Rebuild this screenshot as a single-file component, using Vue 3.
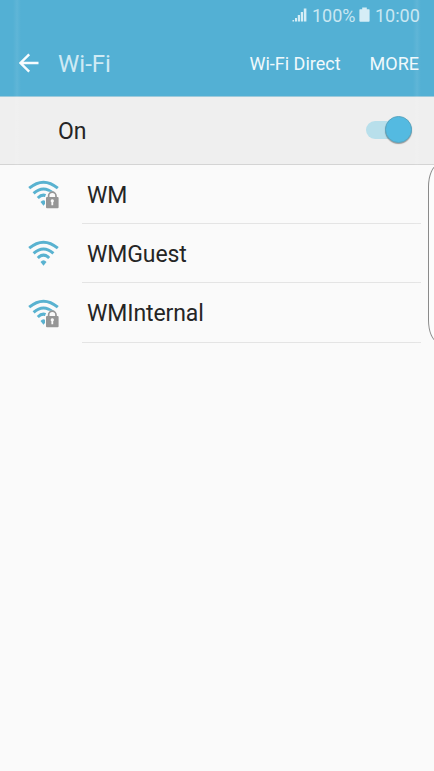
<script setup>
const networks = [
  { name: 'WM', locked: true },
  { name: 'WMGuest', locked: false },
  { name: 'WMInternal', locked: true },
]
</script>

<template>
  <div class="screen">
    <header class="top">
      <div class="status">
        <svg class="signal" width="16" height="16" viewBox="0 0 16 16">
          <path d="M0.5 13h1.6v1.5H0.5zM3 11h2v3.5H3zM5.8 8h2.2v6.5H5.8zM8.8 5h2.2v9.5H8.8zM11.8 1.5h2.6v13h-2.6z" />
        </svg>
        <span class="percent">100%</span>
        <svg class="battery" width="11" height="16" viewBox="0 0 11 16">
          <path d="M3.2 0.5h4.6v1.8H10a.6.6 0 0 1 .6.6V14a.8.8 0 0 1-.8.8H1.2a.8.8 0 0 1-.8-.8V2.9a.6.6 0 0 1 .6-.6h2.2z" />
        </svg>
        <span class="clock">10:00</span>
      </div>
      <div class="bar">
        <svg class="back" width="20" height="20" viewBox="0 0 20 20">
          <path d="M19.5 10H2M10.2 1.3L1.5 10l8.7 8.7" />
        </svg>
        <h1>Wi-Fi</h1>
        <span class="direct">Wi-Fi Direct</span>
        <span class="more">MORE</span>
      </div>
    </header>
    <section class="power">
      <span class="on">On</span>
      <div class="toggle"><div class="knob"></div></div>
    </section>
    <ul>
      <li v-for="n in networks" :key="n.name">
        <svg class="wifi" width="32" height="30" viewBox="0 0 32 30">
          <g class="waves">
            <path d="M1.2 8.2Q15.5 -3.8 29.8 8.2" />
            <path d="M5.6 13.4Q15.5 4.6 25.4 13.4" />
            <path d="M9.8 18Q15.5 12.4 21.2 18" />
          </g>
          <path class="dot" d="M12.5 22Q15.5 18.6 18.5 22L15.5 25.8z" />
          <template v-if="n.locked">
            <path class="gap" d="M17 16.7l1.1-2.6 2.2-2.4h6l3 3v13H17z" />
            <path class="shackle" d="M20.6 18v-2.1a3.7 3.7 0 0 1 7.4 0V18" />
            <rect class="body" x="18" y="17" width="12.6" height="11.2" rx="1" />
            <path class="key" d="M24.3 19.2a1.7 1.7 0 0 1 .9 3.1v3h-1.8v-3a1.7 1.7 0 0 1 .9-3.1z" />
          </template>
        </svg>
        <div class="name"><span>{{ n.name }}</span></div>
      </li>
    </ul>
    <div class="edge edge-left"></div>
    <div class="edge edge-right"></div>
    <div class="handle"></div>
  </div>
</template>

<style>
body { background: #fafafa; }
</style>

<style scoped>
.screen {
  position: relative;
  width: 434px;
  height: 771px;
  overflow: hidden;
  background: #fafafa;
  font-family: Roboto, sans-serif;
  color: #252525;
}
.top {
  height: 97px;
  box-sizing: border-box;
  background: #53b0d4;
  border-bottom: 1px solid #9dcadb;
}
.status {
  height: 31px;
  display: flex;
  align-items: center;
  justify-content: flex-end;
  padding-right: 13px;
  color: #c9e7f2;
  font-size: 18px;
  line-height: 31px;
}
.status svg { fill: #d5edf6; margin-top: -2px; }
.status .signal { margin-right: 4px; }
.percent { width: 47px; }
.status .battery { margin-right: 5px; }
.clock { width: 46px; white-space: nowrap; }
.bar {
  height: 65px;
  display: flex;
  align-items: center;
  padding: 0 15px 0 19px;
}
.back { fill: none; stroke: #f7fcfe; stroke-width: 2.4; margin-top: -2px; }
h1 {
  margin: 0 auto 0 19px;
  font-size: 24px;
  font-weight: 400;
  line-height: 66px;
  color: #cfeaf4;
}
.direct, .more { font-size: 18px; color: #f0f9fc; white-space: nowrap; }
.more { margin-left: 29px; }
.power {
  height: 68px;
  box-sizing: border-box;
  display: flex;
  align-items: center;
  justify-content: space-between;
  padding: 0 22px 0 58px;
  background: #efefef;
  border-bottom: 1px solid #d4d4d4;
}
.on { font-size: 23px; padding-top: 1px; }
.toggle {
  width: 46px;
  height: 18px;
  margin-top: -2px;
  border-radius: 9px;
  background: #b8dfeb;
  display: flex;
  align-items: center;
  justify-content: flex-end;
}
.knob {
  width: 27px;
  height: 27px;
  flex: none;
  box-sizing: border-box;
  border-radius: 50%;
  background: #54bae1;
  border: 1px solid #58a6c1;
  box-shadow: 0 1px 1px rgba(0, 0, 0, 0.35);
}
ul { margin: 0; padding: 0; list-style: none; }
li { display: flex; height: 60px; padding: 0 13px 0 28px; }
li:first-child { height: 59px; }
li:nth-child(2) { height: 59px; }
.wifi { flex: none; margin: 16px 22px 0 0; }
li:first-child .wifi { margin-top: 15px; }
.waves { fill: none; stroke: #59b2d0; stroke-width: 3; }
.dot { fill: #59b2d0; }
.gap { fill: #fafafa; }
.shackle { fill: none; stroke: #969696; stroke-width: 1.7; }
.body { fill: #969696; }
.key { fill: #fafafa; }
.name {
  flex: 1;
  padding-left: 5px;
  border-bottom: 1px solid #e4e4e4;
  font-size: 23px;
  line-height: 61px;
  letter-spacing: -0.1px;
}
li:last-child .name { line-height: 62px; }
.edge {
  position: absolute;
  top: 0;
  bottom: 5px;
  width: 8px;
  background: linear-gradient(90deg, transparent, rgba(255, 255, 255, 0.07), transparent);
  pointer-events: none;
}
.edge-left { left: 13px; }
.edge-right { right: 13px; }
.handle {
  position: absolute;
  left: 428px;
  top: 165px;
  width: 20px;
  height: 177px;
  box-sizing: border-box;
  border: 1px solid #8a8a8a;
  border-radius: 10px / 22px;
  background: #fcfcfc;
}
</style>
